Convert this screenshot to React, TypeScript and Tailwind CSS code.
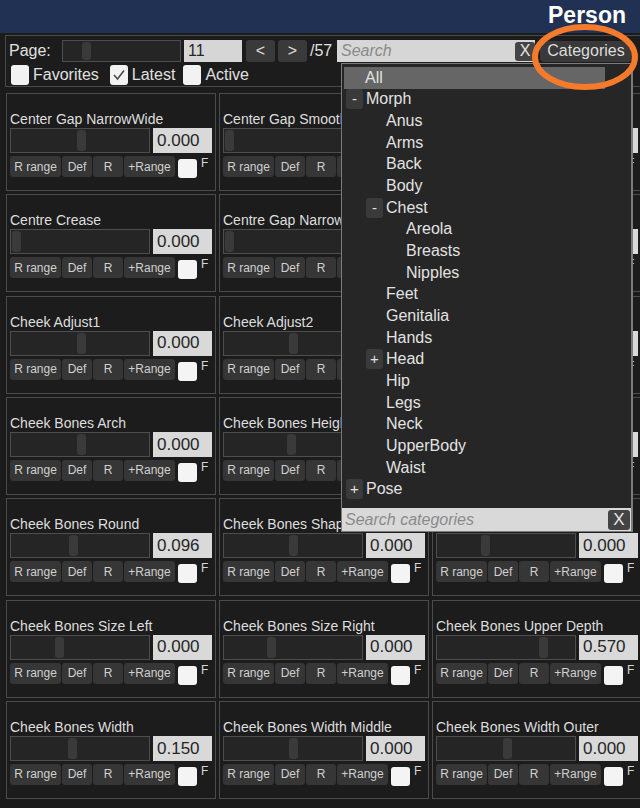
import type { ReactNode } from "react";

type Morph = { name: string; value: string; handle: number };

const rows: Morph[][] = [
    [
        { name: "Center Gap NarrowWide", value: "0.000", handle: 66 },
        { name: "Center Gap Smooth", value: "0.000", handle: 1 },
        { name: "Center Gap Upper", value: "0.000", handle: 66 },
    ],
    [
        { name: "Centre Crease", value: "0.000", handle: 1 },
        { name: "Centre Gap Narrow", value: "0.000", handle: 1 },
        { name: "Centre Gap Wide", value: "0.000", handle: 66 },
    ],
    [
        { name: "Cheek Adjust1", value: "0.000", handle: 66 },
        { name: "Cheek Adjust2", value: "0.000", handle: 65 },
        { name: "Cheek Adjust3", value: "0.000", handle: 66 },
    ],
    [
        { name: "Cheek Bones Arch", value: "0.000", handle: 66 },
        { name: "Cheek Bones Height", value: "0.000", handle: 63 },
        { name: "Cheek Bones Lower", value: "0.000", handle: 66 },
    ],
    [
        { name: "Cheek Bones Round", value: "0.096", handle: 58 },
        { name: "Cheek Bones Shape", value: "0.000", handle: 65 },
        { name: "Cheek Bones Size", value: "0.000", handle: 44 },
    ],
    [
        { name: "Cheek Bones Size Left", value: "0.000", handle: 44 },
        { name: "Cheek Bones Size Right", value: "0.000", handle: 43 },
        { name: "Cheek Bones Upper Depth", value: "0.570", handle: 102 },
    ],
    [
        { name: "Cheek Bones Width", value: "0.150", handle: 57 },
        { name: "Cheek Bones Width Middle", value: "0.000", handle: 65 },
        { name: "Cheek Bones Width Outer", value: "0.000", handle: 66 },
    ],
];

type Cat = { label: string; level: 0 | 1 | 2; toggle?: "-" | "+" };

const categories: Cat[] = [
    { label: "Morph", level: 0, toggle: "-" },
    { label: "Anus", level: 1 },
    { label: "Arms", level: 1 },
    { label: "Back", level: 1 },
    { label: "Body", level: 1 },
    { label: "Chest", level: 1, toggle: "-" },
    { label: "Areola", level: 2 },
    { label: "Breasts", level: 2 },
    { label: "Nipples", level: 2 },
    { label: "Feet", level: 1 },
    { label: "Genitalia", level: 1 },
    { label: "Hands", level: 1 },
    { label: "Head", level: 1, toggle: "+" },
    { label: "Hip", level: 1 },
    { label: "Legs", level: 1 },
    { label: "Neck", level: 1 },
    { label: "UpperBody", level: 1 },
    { label: "Waist", level: 1 },
    { label: "Pose", level: 0, toggle: "+" },
];

const levelPad = ["pl-[4px]", "pl-[24px]", "pl-[44px]"];

function Check({ checked = false }: { checked?: boolean }) {
    return (
        <span className="flex h-[20px] w-[18px] shrink-0 items-center justify-center rounded-[3px] bg-[#f2f2f2]">
            {checked ? (
                <svg width="14" height="14" viewBox="0 0 14 14">
                    <polyline points="2,7 5.5,11 12,2.5" fill="none" stroke="#4a4a4a" strokeWidth="1.6" />
                </svg>
            ) : null}
        </span>
    );
}

function Slider({ handle, className }: { handle: number; className: string }) {
    return (
        <div className={`relative border border-[#4e4e4e] bg-[#252525] ${className}`}>
            <div
                className="absolute top-[1px] bottom-[1px] w-[9px] rounded-[3px] bg-[#3a3a3a]"
                style={{ left: handle }}
            />
        </div>
    );
}

function SmallButton({ children, w }: { children: ReactNode; w: string }) {
    return (
        <div
            className={`flex h-[21px] ${w} items-center justify-center rounded-[3px] bg-[#363636] text-[12px] text-[#d0d0d0]`}
        >
            {children}
        </div>
    );
}

function MorphCard({ m }: { m: Morph }) {
    return (
        <div className="flex h-[98px] flex-col border border-[#4b4b4b] bg-[#1c1c1c] pt-[17px] pl-[3px]">
            <div className="h-[17px] truncate text-[14px] leading-[17px] whitespace-nowrap text-[#dedede]">
                {m.name}
            </div>
            <div className="flex h-[25px] gap-[3px]">
                <Slider handle={m.handle} className="h-[25px] w-[140px]" />
                <div className="flex h-[25px] w-[59px] items-center bg-[#d9d9d9] pl-[4px] text-[17px] text-[#262626]">
                    {m.value}
                </div>
            </div>
            <div className="mt-[3px] flex items-start gap-[1px]">
                <SmallButton w="w-[51px]">R range</SmallButton>
                <SmallButton w="w-[30px]">Def</SmallButton>
                <SmallButton w="w-[30px]">R</SmallButton>
                <SmallButton w="w-[51px]">+Range</SmallButton>
                <span className="mt-[3px] ml-[2px] h-[19px] w-[19px] rounded-[3px] bg-[#f4f4f4]" />
                <span className="ml-[3px] text-[12px] leading-[14px] text-[#d6d6d6]">F</span>
            </div>
        </div>
    );
}

function CategoryMenu() {
    return (
        <div className="absolute top-[63px] left-[341px] flex h-[469px] w-[292px] flex-col border border-r-2 border-[#7c7c7c] bg-[#262626] text-[16px] text-[#e2e2e2]">
            <div className="flex flex-1 flex-col pt-[3px]">
                <div className="ml-[2px] flex h-[21.67px] w-[261px] items-center bg-[#666666] pl-[21px]">All</div>
                {categories.map((c) => (
                    <div key={c.label} className={`flex h-[21.67px] items-center ${levelPad[c.level]}`}>
                        {c.toggle ? (
                            <span className="mr-[3px] flex h-[20px] w-[17px] items-center justify-center rounded-[3px] bg-[#3a3a3a] text-[15px]">
                                {c.toggle}
                            </span>
                        ) : (
                            <span className="mr-[3px] w-[17px]" />
                        )}
                        <span>{c.label}</span>
                    </div>
                ))}
            </div>
            <div className="flex h-[23px] items-center justify-between bg-[#d9d9d9] pr-[1px] pl-[3px]">
                <span className="text-[16px] text-[#8a8a8a] italic">Search categories</span>
                <span className="flex h-[20px] w-[22px] items-center justify-center rounded-[3px] bg-[#444444] text-[17px] text-[#e6e6e6]">
                    X
                </span>
            </div>
        </div>
    );
}

export default function App() {
    return (
        <div className="relative h-[808px] w-[640px] overflow-hidden bg-[#1b1b1b] font-['Liberation_Sans',Arial,sans-serif]">
            <header className="flex h-[33px] items-start justify-end bg-[#213154] pt-[2px] pr-[14px]">
                <span className="text-[23px] leading-[26px] font-bold text-white">Person</span>
            </header>
            <div className="mt-[2px] ml-[5px] flex h-[52px] w-[640px] flex-col border border-[#4a4a4a] bg-[#1c1c1c] pt-[4px] pl-[3px] text-[16px] text-[#e0e0e0]">
                <div className="flex h-[22px] items-center">
                    <span className="w-[53px]">Page:</span>
                    <Slider handle={19} className="h-[22px] w-[119px]" />
                    <div className="ml-[3px] flex h-[22px] w-[58px] items-center bg-[#d6d6d6] pl-[4px] text-[#262626]">11</div>
                    <div className="ml-[4px] flex h-[22px] w-[29px] items-center justify-center rounded-[3px] bg-[#3a3a3a]">&lt;</div>
                    <div className="ml-[3px] flex h-[22px] w-[29px] items-center justify-center rounded-[3px] bg-[#3a3a3a]">&gt;</div>
                    <span className="ml-[3px] w-[27px]">/57</span>
                    <div className="flex h-[22px] w-[198px] items-center justify-between bg-[#d6d6d6] pl-[4px]">
                        <span className="text-[#8a8a8a] italic">Search</span>
                        <span className="flex h-[19px] w-[20px] items-center justify-center rounded-[3px] bg-[#454545] text-[#e6e6e6]">X</span>
                    </div>
                    <div className="ml-[5px] flex h-[21px] w-[92px] items-center justify-center rounded-[4px] bg-[#393939] text-[#dcdcdc]">
                        Categories
                    </div>
                </div>
                <div className="mt-[3px] flex h-[20px] items-center">
                    <span className="ml-[2px]"><Check /></span>
                    <span className="ml-[4px]">Favorites</span>
                    <span className="ml-[11px]"><Check checked /></span>
                    <span className="ml-[4px]">Latest</span>
                    <span className="ml-[8px]"><Check /></span>
                    <span className="ml-[4px]">Active</span>
                </div>
            </div>
            <div className="mt-[6px] ml-[6px] grid grid-cols-[210px_210px_210px] gap-x-[3px] gap-y-[3.33px]">
                {rows.flat().map((m) => (
                    <MorphCard key={m.name} m={m} />
                ))}
            </div>
            <CategoryMenu />
            <svg className="absolute top-0 left-[525px]" width="115" height="100" viewBox="0 0 115 100">
                <ellipse cx="60" cy="57" rx="50" ry="30" fill="none" stroke="#f47a2c" strokeWidth="6" />
            </svg>
        </div>
    );
}
